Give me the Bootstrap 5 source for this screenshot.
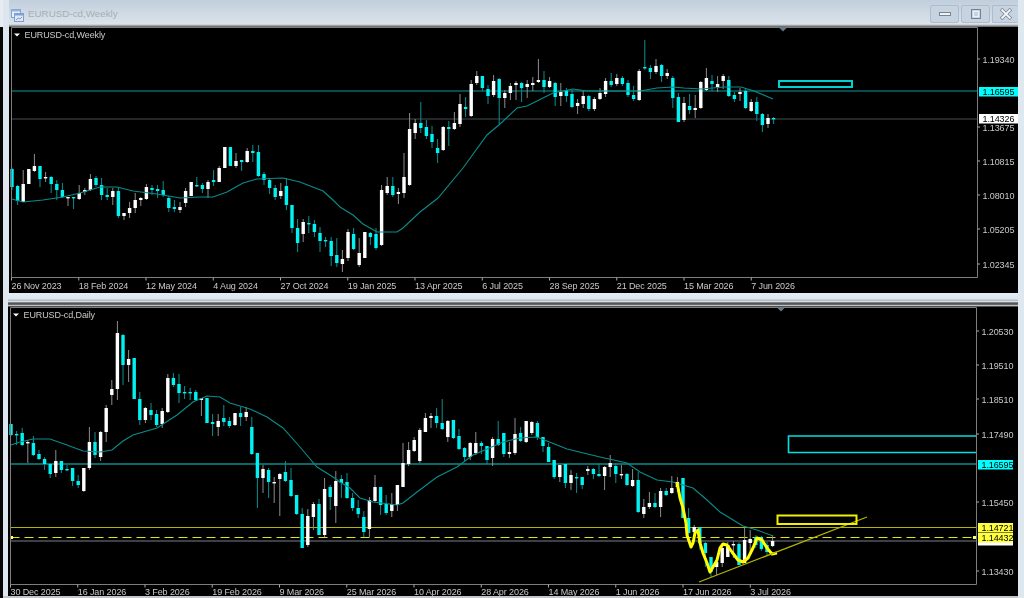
<!DOCTYPE html>
<html lang="en">
<head>
    <meta charset="UTF-8">
    <meta name="viewport" content="width=device-width, initial-scale=1.0">
    <title>EURUSD-cd charts</title>
    <link href="https://cdn.jsdelivr.net/npm/bootstrap@5.3.0/dist/css/bootstrap.min.css" rel="stylesheet">
    <style>
        html, body { height: 598px; overflow: hidden; }
        body { background: #dfe7ef; font-family: "Liberation Sans", Arial, sans-serif; }
        .side-sliver { width: 3px; background: linear-gradient(#e6ecf2 0, #e6ecf2 27px, #050505 27px, #050505 100%); }
        .term-window { width: 1015px; background: #dde6ef; }
        .window-head {
            height: 27px;
            padding: 5px 0 0 2px;
            background: linear-gradient(#c1cedc, #dbe3ea 88%, #f0f3f6 88%, #8d9296 96%, #555 100%);
        }
        .window-name { color: #a6aeb6; font-size: 9.8px; line-height: 18px; }
        .win-btn {
            width: 29px; height: 18px; padding: 0;
            background: #c6d3e0; border: 1px solid #aebccb; border-radius: 2px;
        }
        .win-btn:hover { background: #c6d3e0; border-color: #aebccb; }
        .win-btn + .win-btn { margin-left: 2px; }
        .win-close { width: 26px; border-right: 0; }
        .win-btn svg { display: block; margin: auto; }
        .head-slim {
            height: 14px;
            background: linear-gradient(#e4edf6 0, #d8e4f1 45%, #9da3a8 50%, #e2e7ec 60%, #4c4f52 72%, #6a6d70 84%, #c8ccd0 90%, #0a0a0a 100%);
        }
        .frame-left { padding-left: 6px; }
        .frame-low { padding-left: 5px; }
        .chart-box { display: block; background: #000; filter: blur(0.3px); }
        .chart-box text { font-family: "Liberation Sans", Arial, sans-serif; font-size: 9px; letter-spacing: -0.1px; fill: #c9c9c9; }
        .chart-box text.tag-text { fill: #000; }
        .bottom-rule { height: 2px; background: #c2c6ca; }
    </style>
</head>
<body>
    <div class="d-flex">
        <div class="side-sliver"></div>
        <div class="d-flex flex-column">
            <!-- weekly window -->
            <div class="term-window frame-left">
                <div class="window-head d-flex align-items-start gap-1">
                    <svg width="13" height="13" viewBox="0 0 13 13" class="mt-1">
                        <rect x="0.5" y="0.5" width="9" height="8" fill="#eaf0fa" stroke="#7fa2d6"/>
                        <rect x="0.5" y="0.5" width="9" height="2" fill="#8fb2e4"/>
                        <rect x="3.5" y="4.5" width="9" height="8" fill="#dfe8f6" stroke="#7f9ccc"/>
                        <rect x="3.5" y="4.5" width="9" height="2" fill="#7fa2d6"/>
                        <path d="M5 11l2-2 2 1 2-2" fill="none" stroke="#7f9ccc"/>
                    </svg>
                    <span class="window-name">EURUSD-cd,Weekly</span>
                    <div class="ms-auto d-flex">
                        <button type="button" class="btn win-btn">
                            <svg width="14" height="8" viewBox="0 0 14 8"><rect x="1.5" y="2.5" width="11" height="3" fill="#eef2f6" stroke="#78838e"/></svg>
                        </button>
                        <button type="button" class="btn win-btn">
                            <svg width="14" height="12" viewBox="0 0 14 12"><rect x="2.5" y="1.5" width="9" height="9" fill="none" stroke="#78838e" stroke-width="1"/><rect x="4.5" y="3.5" width="5" height="5" fill="none" stroke="#eef2f6"/></svg>
                        </button>
                        <button type="button" class="btn win-btn win-close">
                            <svg width="14" height="12" viewBox="0 0 14 12"><path d="M2 1l10 10M12 1L2 11" stroke="#78838e" stroke-width="3.4"/><path d="M2.5 1.5l9 9M11.5 1.5l-9 9" stroke="#f4f6f8" stroke-width="1.8"/></svg>
                        </button>
                    </div>
                </div>
                <svg id="chartWeekly" class="chart-box" width="1009" height="266" viewBox="9 27 1009 266"></svg>
            </div>
            <!-- daily window -->
            <div class="term-window frame-low">
                <div class="head-slim"></div>
                <svg id="chartDaily" class="chart-box" width="1010" height="289" viewBox="8 307 1010 289"></svg>
            </div>
            <div class="term-window bottom-rule"></div>
        </div>
    </div>

    <script>
        // each candle: cyan?, body top, body bottom, wick top, wick bottom (page px)
        const weekly = [
            [1,169,187,168,190],[1,186,201,185,205],[0,184,202,170,202],[0,169,184,169,184],[0,166,171,154,172],[1,166,179,166,187],[0,177,178,172,182],[1,177,184,176,193],
            [1,184,190,180,200],[1,190,197,183,198],[0,197,198,197,206],[1,197,198,197,209],[0,193,199,185,200],[0,190,192,188,195],[0,179,190,174,191],[1,178,185,176,187],
            [1,185,195,178,200],[1,195,197,188,200],[0,191,197,188,205],[1,191,216,187,218],[0,213,216,213,220],[0,208,213,202,218],[0,200,208,193,213],[0,198,200,197,206],
            [0,187,199,184,200],[1,188,190,185,195],[1,189,191,185,198],[1,190,195,181,197],[1,198,208,196,212],[1,207,209,200,212],[0,207,210,202,213],[0,191,203,188,207],
            [0,182,196,182,196],[1,185,186,177,187],[1,185,189,183,193],[0,182,189,180,198],[1,180,182,170,186],[0,168,182,166,182],[0,147,168,147,168],[1,147,166,147,166],
            [0,161,166,153,168],[1,160,162,160,171],[0,151,162,148,163],[1,151,153,145,162],[1,152,176,145,177],[1,174,180,172,185],[1,180,188,178,194],[1,188,197,185,200],
            [0,191,196,183,199],[1,186,205,178,210],[1,205,228,205,233],[1,228,243,219,252],[0,222,234,219,242],[1,223,224,216,233],[1,224,232,220,237],[1,233,241,227,252],
            [1,240,241,237,247],[1,241,256,237,266],[1,255,263,238,267],[0,259,264,250,272],[0,232,258,229,261],[1,234,249,228,250],[0,253,265,238,267],[0,232,258,232,258],
            [1,233,237,232,245],[1,234,248,228,250],[0,190,245,185,246],[0,186,193,177,195],[1,186,195,177,197],[0,192,194,188,204],[0,177,193,153,198],[0,129,185,113,186],
            [0,123,133,119,139],[1,123,128,102,133],[1,127,136,120,139],[1,134,142,126,148],[1,148,153,139,163],[0,127,150,126,151],[1,127,129,121,146],[0,123,129,112,130],
            [0,104,124,94,127],[1,107,109,97,117],[0,84,116,80,117],[0,76,83,71,85],[1,76,88,76,91],[1,89,96,85,104],[0,81,95,75,97],[1,79,98,78,124],
            [0,93,98,90,108],[0,86,93,83,100],[0,83,85,81,100],[1,83,88,82,102],[0,84,87,80,98],[0,83,85,77,91],[0,80,82,59,83],[1,80,87,71,93],
            [0,81,87,77,88],[1,83,97,82,106],[0,92,96,83,106],[1,90,96,88,102],[1,94,107,90,108],[0,103,106,99,114],[0,96,104,91,108],[1,96,109,95,111],
            [0,99,109,97,111],[0,93,99,88,100],[0,81,94,78,97],[1,81,85,73,87],[0,78,84,74,86],[1,78,84,76,86],[1,83,95,80,97],[1,95,99,86,101],
            [0,71,100,69,101],[1,67,68,40,70],[1,68,72,65,79],[0,66,72,59,74],[1,65,76,64,82],[0,73,76,69,79],[1,78,98,76,108],[1,97,122,93,122],
            [0,103,120,97,122],[1,106,110,94,114],[0,108,110,95,118],[0,82,108,81,109],[0,78,90,68,91],[1,81,84,75,91],[0,84,87,76,92],[0,76,81,74,89],
            [1,80,96,76,97],[1,95,99,92,102],[0,92,94,88,101],[1,91,108,88,109],[0,102,111,99,112],[1,102,114,97,121],[1,114,125,113,132],[0,118,124,114,128],[1,118,119,117,124]
        ];
        const daily = [
            [1,424,435,424,436],[1,434,435,431,445],[1,433,445,428,446],[0,442,443,440,463],[1,443,455,436,456],[1,454,459,450,460],[1,459,464,457,470],[1,464,474,463,478],
            [0,461,473,450,477],[1,461,470,461,473],[1,469,470,465,471],[1,468,481,468,486],[1,481,485,475,488],[0,468,491,468,492],[0,442,468,427,470],[1,442,455,432,458],
            [0,432,457,431,461],[0,408,432,405,442],[0,389,395,380,405],[0,333,389,321,400],[1,335,365,334,385],[0,359,365,350,382],[1,358,399,358,399],[1,399,420,392,425],
            [0,408,420,407,423],[1,410,415,403,420],[1,414,425,410,427],[0,411,424,408,428],[0,378,412,374,413],[1,378,385,373,387],[1,384,393,374,403],[1,392,393,386,399],
            [1,392,393,388,400],[1,392,400,390,401],[0,398,400,398,416],[1,398,423,398,423],[1,422,424,414,436],[0,421,427,414,436],[1,418,422,405,426],[1,421,426,417,428],
            [0,413,425,413,426],[1,413,417,407,426],[0,412,417,407,421],[1,427,454,417,455],[1,453,478,453,508],[0,469,478,465,493],[1,470,482,468,498],[0,482,483,477,503],
            [0,474,479,473,516],[1,472,481,461,482],[1,480,496,468,497],[1,495,514,495,515],[1,514,548,508,548],[0,516,545,509,547],[0,504,517,502,530],[1,504,535,499,535],
            [0,489,535,478,537],[1,487,497,485,510],[0,481,506,471,523],[1,479,483,475,498],[1,482,498,473,499],[1,498,508,493,511],[1,508,514,500,518],[1,517,532,511,537],
            [0,500,529,497,537],[0,487,501,475,502],[1,487,505,487,515],[1,504,513,495,515],[0,504,511,493,517],[0,485,505,485,511],[0,463,487,443,487],[0,450,464,442,466],
            [0,440,451,437,452],[0,430,461,428,463],[0,418,432,413,432],[0,416,418,413,428],[1,416,423,408,428],[1,423,429,399,430],[0,421,437,420,442],[1,420,438,420,439],
            [1,436,449,429,450],[1,448,457,447,461],[0,443,457,442,460],[0,443,453,432,455],[1,443,446,441,454],[1,446,460,446,464],[0,439,458,437,466],[1,439,445,421,446],
            [1,433,454,433,457],[0,452,454,442,458],[0,434,453,418,455],[1,433,441,427,442],[0,421,442,421,443],[0,422,433,421,435],[1,423,437,421,440],[1,437,446,437,452],
            [1,447,462,443,462],[1,460,477,460,479],[0,465,477,465,482],[1,464,483,464,488],[0,475,483,470,490],[1,477,478,473,493],[1,477,485,477,489],[0,469,471,466,475],
            [1,469,474,468,479],[1,474,476,464,477],[0,467,476,466,490],[0,463,467,455,477],[1,466,474,463,483],[0,474,475,465,479],[1,474,485,473,486],[0,480,486,469,487],
            [1,480,512,472,513],[0,507,514,499,518],[0,503,507,492,509],[1,503,507,493,508],[0,491,507,488,517],[1,491,495,488,496],[0,488,493,476,494],[0,482,487,477,492],
            [1,478,518,478,518],[1,518,533,508,535],[0,527,532,525,537],[1,527,543,527,550],[1,543,553,542,567],[1,557,572,557,577],[0,562,567,558,575],[0,548,563,543,567],
            [0,545,557,542,557],[0,544,545,541,558],[1,544,565,542,565],[0,540,563,526,563],[0,539,543,530,553],[1,537,545,535,548],[1,537,549,536,551],[1,545,552,542,556],[0,541,546,535,547]
        ];

        const maWeekly = [[12,199],[23,202],[43,200],[63,197],[80,193],[100,187],[117,187],[133,191],[157,194],[180,198],[200,197],[213,197],[227,192],[243,183],[257,179],[283,178],[300,182],[323,191],[333,200],[340,207],[353,215],[363,224],[377,232],[397,232],[403,228],[420,212],[438,198],[463,168],[487,135],[500,124],[517,108],[527,106],[543,98],[553,93],[573,89],[587,91],[617,91],[640,91],[657,88],[673,87],[684,88],[701,89],[724,87],[741,87],[754,91],[773,99]];
        const maDaily = [[11,445],[20,442],[33,439],[50,439],[67,445],[83,451],[100,452],[112,450],[123,441],[133,435],[157,428],[177,415],[193,402],[207,396],[220,397],[230,403],[250,409],[267,417],[283,428],[300,447],[317,467],[333,477],[340,482],[350,488],[360,498],[373,502],[397,505],[403,503],[417,492],[437,477],[457,467],[473,455],[487,449],[503,442],[520,438],[537,437],[547,441],[567,449],[600,457],[627,463],[640,472],[657,480],[673,482],[693,488],[707,500],[720,512],[743,526],[757,530],[773,536]];
        const zigzag = [[677,482],[680,498],[683,508],[686,523],[687,535],[691,547],[693,543],[695,533],[698,530],[700,543],[703,553],[707,563],[710,572],[713,567],[717,560],[720,548],[723,544],[727,545],[732,552],[738,560],[743,562],[748,558],[753,548],[757,538],[762,540],[767,548],[772,554],[777,553]];

        const toPath = pts => pts.map(p => p.join(",")).join(" ");

        function drawChart(svgId, cfg) {
            let html = "";

            // guide lines go under the candles
            cfg.lines.forEach(l => {
                html += `<line x1="${cfg.left}" x2="${cfg.right}" y1="${l.y}" y2="${l.y}" stroke="${l.color}" stroke-width="${l.w}" ${l.dash ? `stroke-dasharray="${l.dash}"` : ""}/>`;
            });

            cfg.candles.forEach((c, i) => {
                let x = cfg.left + 0.5 + i * 5.6;
                html += `<line x1="${x}" x2="${x}" y1="${c[3]}" y2="${c[4]}" stroke="${c[0] ? "#0b8f8f" : "#8c8c8c"}" stroke-width="1"/>`;
                html += `<rect x="${x - 1.7}" y="${c[1]}" width="3.4" height="${Math.max(c[2] - c[1], 1.4)}" fill="${c[0] ? "#00f2f2" : "#ffffff"}"/>`;
            });

            html += `<polyline points="${toPath(cfg.ma)}" fill="none" stroke="#0b8c8c" stroke-width="1.1"/>`;
            html += cfg.extra;

            // plot frame
            html += `<path d="M${cfg.left} ${cfg.bottom}V${cfg.top}H${cfg.right}V${cfg.bottom}Z" fill="none" stroke="#7d7d7d" stroke-width="1"/>`;
            html += `<path d="M${cfg.left + 2.5} ${cfg.top + 6}h6l-3 3z" fill="#fff"/>`;
            html += `<text x="${cfg.left + 13}" y="${cfg.top + 10}">${cfg.name}</text>`;
            html += `<path d="M${cfg.marker - 4} ${cfg.top}h8l-4 4z" fill="#667888"/>`;

            cfg.prices.forEach(p => {
                html += `<line x1="${cfg.right}" x2="${cfg.right + 2.5}" y1="${p[1]}" y2="${p[1]}" stroke="#aaa"/>`;
                html += `<text x="${cfg.right + 5}" y="${p[1] + 3.5}">${p[0]}</text>`;
            });
            cfg.dates.forEach((d, k) => {
                let x = cfg.left + k * 67.25;
                html += `<line x1="${x}" x2="${x}" y1="${cfg.bottom}" y2="${cfg.bottom + 3}" stroke="#aaa"/>`;
                html += `<text x="${x}" y="${cfg.bottom + cfg.dateGap}">${d}</text>`;
            });
            cfg.tags.forEach(t => {
                html += `<rect x="${cfg.right + 1.5}" y="${t.y - 4.5}" width="${t.w}" height="9.5" fill="${t.bg}"/>`;
                html += `<text class="tag-text" x="${cfg.right + 5}" y="${t.y + 3.5}">${t.text}</text>`;
            });

            document.getElementById(svgId).innerHTML = html;
        }

        drawChart("chartWeekly", {
            left: 11.5, right: 977.5, top: 27.5, bottom: 277.5, marker: 783, dateGap: 11,
            name: "EURUSD-cd,Weekly", candles: weekly, ma: maWeekly,
            lines: [
                { y: 91, color: "#109a9a", w: 1 },
                { y: 119, color: "#454c50", w: 1 }
            ],
            extra: `<rect x="779" y="81" width="73" height="6" fill="none" stroke="#00d0d0" stroke-width="2"/>`,
            prices: [["1.19340",59],["1.13675",127],["1.10815",161],["1.08010",195],["1.05205",229],["1.02345",264]],
            dates: ["26 Nov 2023","18 Feb 2024","12 May 2024","4 Aug 2024","27 Oct 2024","19 Jan 2025","13 Apr 2025","6 Jul 2025","28 Sep 2025","21 Dec 2025","15 Mar 2026","7 Jun 2026"],
            tags: [
                { y: 91.5, w: 39, bg: "#00ffff", text: "1.16595" },
                { y: 118.5, w: 39, bg: "#ffffff", text: "1.14326" }
            ]
        });

        drawChart("chartDaily", {
            left: 10.5, right: 976.5, top: 307.5, bottom: 584.5, marker: 781, dateGap: 10,
            name: "EURUSD-cd,Daily", candles: daily, ma: maDaily,
            lines: [
                { y: 464, color: "#0d8c8c", w: 1.4 },
                { y: 527.5, color: "#b4b400", w: 1.2 },
                { y: 541, color: "#3b4045", w: 2 },
                { y: 537.5, color: "#e6e600", w: 1.2, dash: "9 5" }
            ],
            extra: `<polyline points="${toPath(zigzag)}" fill="none" stroke="#ffff00" stroke-width="3" stroke-linejoin="round"/>
                <line x1="699" y1="582" x2="867" y2="517" stroke="#b4b400" stroke-width="1.2"/>
                <rect x="777.5" y="515.5" width="79" height="8.5" fill="none" stroke="#f0f000" stroke-width="2"/>
                <path d="M976 436H788.5V452.5H976" fill="none" stroke="#00e0e0" stroke-width="1.6"/>
                <rect x="10" y="536" width="3" height="3" fill="#ffff66"/>
                <rect x="973" y="536" width="3" height="3" fill="#ffff66"/>`,
            prices: [["1.20530",331],["1.19510",365],["1.18510",399],["1.17490",434],["1.15450",502],["1.13430",571]],
            dates: ["30 Dec 2025","16 Jan 2026","3 Feb 2026","19 Feb 2026","9 Mar 2026","25 Mar 2026","10 Apr 2026","28 Apr 2026","14 May 2026","1 Jun 2026","17 Jun 2026","3 Jul 2026"],
            tags: [
                { y: 464.5, w: 35, bg: "#00ffff", text: "1.16595" },
                { y: 540.5, w: 35, bg: "#ffffff", text: "" },
                { y: 527.5, w: 35, bg: "#ffff40", text: "1.14721" },
                { y: 537.5, w: 35, bg: "#ffff40", text: "1.14432" }
            ]
        });
    </script>

    <script src="https://cdn.jsdelivr.net/npm/bootstrap@5.3.0/dist/js/bootstrap.bundle.min.js"></script>
</body>
</html>
